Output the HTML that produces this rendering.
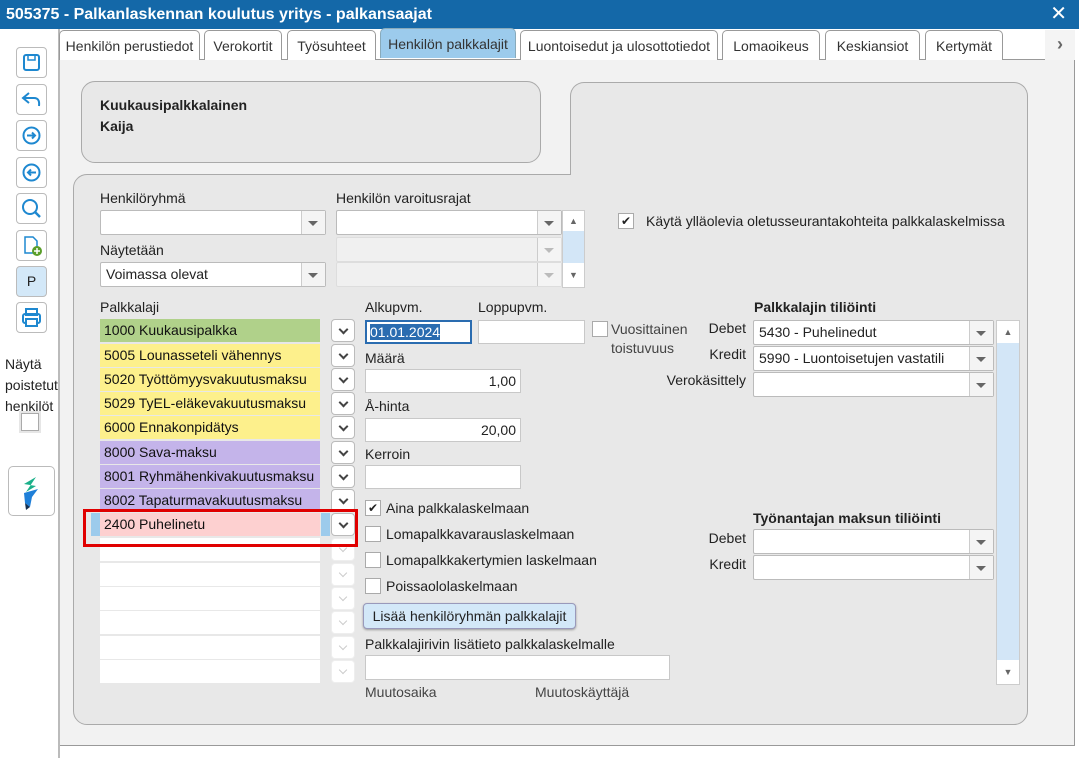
<!DOCTYPE html>
<html><head><meta charset="utf-8"><style>
*{box-sizing:border-box;margin:0;padding:0}
body{width:1079px;height:758px;position:relative;overflow:hidden;background:#fff;font-family:"Liberation Sans",sans-serif;font-size:14px;color:#222}
.a{position:absolute}
.title{left:0;top:0;width:1079px;height:29px;background:#1468a8;color:#fff;font-weight:bold;font-size:16px;line-height:29px;padding-left:6px}
.tab{position:absolute;top:30px;height:30px;border:1px solid #999;border-bottom:none;border-radius:5px 5px 0 0;background:#fff;text-align:center;line-height:30px;font-size:14px;color:#333}
.sb{position:absolute;left:16px;width:31px;height:31px;border:1px solid #bbb;border-radius:4px;background:#fff}
.inp{position:absolute;background:#fff;border:1px solid #c8c8c8;height:24px}
.sel{position:absolute;background:#fff;border:1px solid #bbb;border-radius:2px;height:25px;font-size:14px;line-height:23px;padding-left:5px}
.sel:after{content:"";position:absolute;right:0;top:0;width:23px;height:100%;border-left:1px solid #ccc;background:#f4f4f4}
.sel i{position:absolute;right:7px;top:10px;width:0;height:0;border-left:5px solid transparent;border-right:5px solid transparent;border-top:5px solid #666;z-index:2}
.lbl{position:absolute;font-size:14px}
.row{position:absolute;left:100px;width:220px;height:23px;font-size:14px;line-height:23px;padding-left:4px;color:#111}
.dd{position:absolute;left:331px;width:24px;height:23px;background:#fff;border:1px solid #bbb;border-radius:4px}
.dd:after{content:"";position:absolute;left:8px;top:6px;width:5px;height:5px;border-right:2px solid #444;border-bottom:2px solid #444;transform:rotate(45deg)}
.dd.x{border-color:#eee}.dd.x:after{border-color:#ccc;border-width:0 1px 1px 0}
.cb{position:absolute;width:16px;height:16px;border:1px solid #aaa;background:#fff;font-size:12px;line-height:14px;text-align:center}
</style></head><body>
<div class="a title">505375 - Palkanlaskennan koulutus yritys - palkansaajat<span style="position:absolute;right:12px;top:0;font-size:20px;font-weight:normal">✕</span></div>
<div class="a" style="left:58px;top:29px;width:2px;height:729px;background:#bbb"></div>
<div class="sb" style="top:47px"><svg width="29" height="29"><rect x="7" y="7" width="15" height="15" rx="2" fill="none" stroke="#1e88d0" stroke-width="2"/><rect x="11" y="7" width="7" height="5" fill="none" stroke="#1e88d0" stroke-width="1.5"/></svg></div>
<div class="sb" style="top:84px"><svg width="29" height="29"><path d="M12 8 L6 13 L12 18 M6 13 H17 Q23 13 22 21" fill="none" stroke="#1e88d0" stroke-width="2"/></svg></div>
<div class="sb" style="top:120px"><svg width="29" height="29"><circle cx="14.5" cy="14.5" r="8" fill="none" stroke="#1e88d0" stroke-width="2"/><path d="M10 14.5H18M15 11.5L18 14.5L15 17.5" fill="none" stroke="#1e88d0" stroke-width="2"/></svg></div>
<div class="sb" style="top:157px"><svg width="29" height="29"><circle cx="14.5" cy="14.5" r="8" fill="none" stroke="#1e88d0" stroke-width="2"/><path d="M19 14.5H11M14 11.5L11 14.5L14 17.5" fill="none" stroke="#1e88d0" stroke-width="2"/></svg></div>
<div class="sb" style="top:193px"><svg width="29" height="29"><circle cx="13" cy="13" r="7" fill="none" stroke="#1e88d0" stroke-width="2"/><path d="M18 18L23 23" stroke="#1e88d0" stroke-width="2.5"/></svg></div>
<div class="sb" style="top:230px"><svg width="29" height="29"><path d="M8 6H16L20 10V22H8Z" fill="none" stroke="#1e88d0" stroke-width="1.5"/><circle cx="20" cy="20" r="5" fill="#5a9e2a"/><path d="M17 20H23M20 17V23" stroke="#fff" stroke-width="1.5"/></svg></div>
<div class="sb" style="top:266px;background:#d3e8f8;text-align:center;line-height:29px;font-size:14px">P</div>
<div class="sb" style="top:302px"><svg width="29" height="29"><rect x="9" y="6" width="11" height="6" fill="none" stroke="#1e88d0" stroke-width="2"/><rect x="6" y="11" width="17" height="9" rx="2" fill="none" stroke="#1e88d0" stroke-width="2"/><rect x="9" y="16" width="11" height="7" fill="#fff" stroke="#1e88d0" stroke-width="2"/></svg></div>
<div class="lbl" style="left:5px;top:354px;font-size:14px;line-height:21px">Näytä<br>poistetut<br>henkilöt</div>
<div class="a" style="left:19px;top:411px;width:22px;height:22px;background:#e6e6e6"></div>
<div class="cb" style="left:21px;top:413px;width:18px;height:18px"></div>
<div class="sb" style="left:8px;top:466px;width:47px;height:50px;border-radius:5px"><svg width="45" height="48"><path d="M27 10 L15 17 L27 19 L17 25Z" fill="#1bb08a"/><path d="M15 26 L29 22 L23 30 L21 40 L16 36Z" fill="#1e7fd8"/><path d="M16 36 L21 40 L17 43Z" fill="#153050"/></svg></div>
<div class="a" style="left:60px;top:60px;width:1015px;height:686px;background:#f2f2f2;border-right:1px solid #999;border-bottom:1px solid #999"></div>
<div class="a" style="left:60px;top:59px;width:1015px;height:1px;background:#999"></div>
<div class="tab" style="left:59px;width:141px">Henkilön perustiedot</div>
<div class="tab" style="left:204px;width:78px">Verokortit</div>
<div class="tab" style="left:287px;width:89px">Työsuhteet</div>
<div class="tab" style="left:380px;width:136px;background:#9ccbec;height:30px;top:28px;border-color:#8ab">Henkilön palkkalajit</div>
<div class="tab" style="left:520px;width:198px">Luontoisedut ja ulosottotiedot</div>
<div class="tab" style="left:722px;width:98px">Lomaoikeus</div>
<div class="tab" style="left:825px;width:95px">Keskiansiot</div>
<div class="tab" style="left:925px;width:78px;text-align:left;padding-left:10px;overflow:hidden">Kertymät</div>
<div class="a" style="left:1045px;top:30px;width:30px;height:30px;background:#f4f4f4;text-align:center;line-height:28px;font-size:18px;color:#666;font-weight:bold">›</div>
<div class="a" style="left:81px;top:81px;width:460px;height:82px;background:#e8e8e8;border:1px solid #aaa;border-radius:14px"></div>
<div class="lbl" style="left:100px;top:95px;font-weight:bold;line-height:21px">Kuukausipalkkalainen<br>Kaija</div>
<div class="a" style="left:73px;top:174px;width:955px;height:551px;background:#e8e8e8;border:1px solid #aaa;border-radius:14px 0 14px 14px"></div>
<div class="a" style="left:570px;top:82px;width:458px;height:93px;background:#e8e8e8;border:1px solid #aaa;border-bottom:none;border-radius:14px 14px 0 0"></div>
<div class="a" style="left:571px;top:170px;width:456px;height:14px;background:#e8e8e8"></div>
<div class="lbl" style="left:100px;top:190px">Henkilöryhmä</div>
<div class="sel" style="left:100px;top:210px;width:226px"><i></i></div>
<div class="lbl" style="left:336px;top:190px">Henkilön varoitusrajat</div>
<div class="sel" style="left:336px;top:210px;width:226px"><i></i></div>
<div class="sel" style="left:336px;top:237px;width:226px;background:#f0f0f0;border-color:#ddd"><i style="border-top-color:#bbb"></i></div>
<div class="sel" style="left:336px;top:262px;width:226px;background:#f0f0f0;border-color:#ddd"><i style="border-top-color:#bbb"></i></div>
<div class="a" style="left:562px;top:210px;width:23px;height:78px;background:#d3e6f7;border:1px solid #ccc"></div>
<div class="a" style="left:563px;top:211px;width:21px;height:20px;background:#fff;text-align:center;font-size:9px;line-height:20px;color:#666">▲</div>
<div class="a" style="left:563px;top:263px;width:21px;height:24px;background:#fff;text-align:center;font-size:9px;line-height:24px;color:#666">▼</div>
<div class="lbl" style="left:100px;top:242px">Näytetään</div>
<div class="sel" style="left:100px;top:262px;width:226px">Voimassa olevat<i></i></div>
<div class="cb" style="left:618px;top:213px">✔</div>
<div class="lbl" style="left:646px;top:213px">Käytä ylläolevia oletusseurantakohteita palkkalaskelmissa</div>
<div class="lbl" style="left:100px;top:299px">Palkkalaji</div>
<div class="row" style="top:319px;background:#b0d18a">1000 Kuukausipalkka</div>
<div class="row" style="top:344px;background:#fdf08c">5005 Lounasseteli vähennys</div>
<div class="row" style="top:368px;background:#fdf08c">5020 Työttömyysvakuutusmaksu</div>
<div class="row" style="top:392px;background:#fdf08c">5029 TyEL-eläkevakuutusmaksu</div>
<div class="row" style="top:416px;background:#fdf08c">6000 Ennakonpidätys</div>
<div class="row" style="top:441px;background:#c4b4ea">8000 Sava-maksu</div>
<div class="row" style="top:465px;background:#c4b4ea">8001 Ryhmähenkivakuutusmaksu</div>
<div class="row" style="top:489px;background:#c4b4ea">8002 Tapaturmavakuutusmaksu</div>
<div class="a" style="left:91px;top:513px;width:9px;height:23px;background:#9ccbec"></div>
<div class="a" style="left:321px;top:513px;width:9px;height:23px;background:#9ccbec"></div>
<div class="row" style="top:513px;background:#fdd0d0">2400 Puhelinetu</div>
<div class="row" style="top:538px;background:#fff"></div>
<div class="row" style="top:563px;background:#fff"></div>
<div class="row" style="top:587px;background:#fff"></div>
<div class="row" style="top:611px;background:#fff"></div>
<div class="row" style="top:636px;background:#fff"></div>
<div class="row" style="top:660px;background:#fff"></div>
<div class="dd" style="top:319px"></div><div class="dd" style="top:344px"></div><div class="dd" style="top:368px"></div><div class="dd" style="top:392px"></div><div class="dd" style="top:416px"></div><div class="dd" style="top:441px"></div><div class="dd" style="top:465px"></div><div class="dd" style="top:489px"></div><div class="dd" style="top:513px"></div>
<div class="dd x" style="top:538px"></div><div class="dd x" style="top:563px"></div><div class="dd x" style="top:587px"></div><div class="dd x" style="top:611px"></div><div class="dd x" style="top:636px"></div><div class="dd x" style="top:660px"></div>
<div class="a" style="left:83px;top:509px;width:275px;height:38px;border:3px solid #e00000"></div>
<div class="lbl" style="left:365px;top:299px">Alkupvm.</div>
<div class="lbl" style="left:478px;top:299px">Loppupvm.</div>
<div class="inp" style="left:365px;top:320px;width:107px;border:2px solid #2a6cb0;padding:2px 3px"><span style="background:#2a6cb0;color:#fff;font-size:14px;line-height:16px">01.01.2024</span></div>
<div class="inp" style="left:478px;top:320px;width:107px"></div>
<div class="cb" style="left:592px;top:321px"></div>
<div class="lbl" style="left:611px;top:320px;line-height:19px;color:#444">Vuosittainen<br>toistuvuus</div>
<div class="lbl" style="left:365px;top:350px">Määrä</div>
<div class="inp" style="left:365px;top:369px;width:156px;text-align:right;padding-right:4px;line-height:22px">1,00</div>
<div class="lbl" style="left:365px;top:398px">Å-hinta</div>
<div class="inp" style="left:365px;top:418px;width:156px;text-align:right;padding-right:4px;line-height:22px">20,00</div>
<div class="lbl" style="left:365px;top:446px">Kerroin</div>
<div class="inp" style="left:365px;top:465px;width:156px"></div>
<div class="cb" style="left:365px;top:500px">✔</div><div class="lbl" style="left:386px;top:500px">Aina palkkalaskelmaan</div>
<div class="cb" style="left:365px;top:526px"></div><div class="lbl" style="left:386px;top:526px">Lomapalkkavarauslaskelmaan</div>
<div class="cb" style="left:365px;top:552px"></div><div class="lbl" style="left:386px;top:552px">Lomapalkkakertymien laskelmaan</div>
<div class="cb" style="left:365px;top:578px"></div><div class="lbl" style="left:386px;top:578px">Poissaololaskelmaan</div>
<div class="a" style="left:363px;top:603px;width:213px;height:26px;background:#d3e8f8;border:1px solid #99b;border-radius:4px;font-size:14px;line-height:24px;text-align:center;box-shadow:0 1px 2px #999">Lisää henkilöryhmän palkkalajit</div>
<div class="lbl" style="left:365px;top:636px">Palkkalajirivin lisätieto palkkalaskelmalle</div>
<div class="inp" style="left:365px;top:655px;width:305px;height:25px"></div>
<div class="lbl" style="left:365px;top:684px;color:#444">Muutosaika</div>
<div class="lbl" style="left:535px;top:684px;color:#444">Muutoskäyttäjä</div>
<div class="lbl" style="left:754px;top:299px;font-weight:bold">Palkkalajin tiliöinti</div>
<div class="lbl" style="left:706px;top:320px;width:40px;text-align:right">Debet</div>
<div class="sel" style="left:753px;top:320px;width:241px">5430 - Puhelinedut<i></i></div>
<div class="lbl" style="left:706px;top:346px;width:40px;text-align:right">Kredit</div>
<div class="sel" style="left:753px;top:346px;width:241px">5990 - Luontoisetujen vastatili<i></i></div>
<div class="lbl" style="left:650px;top:372px;width:96px;text-align:right">Verokäsittely</div>
<div class="sel" style="left:753px;top:372px;width:241px"><i></i></div>
<div class="lbl" style="left:753px;top:510px;font-weight:bold">Työnantajan maksun tiliöinti</div>
<div class="lbl" style="left:706px;top:530px;width:40px;text-align:right">Debet</div>
<div class="sel" style="left:753px;top:529px;width:241px"><i></i></div>
<div class="lbl" style="left:706px;top:556px;width:40px;text-align:right">Kredit</div>
<div class="sel" style="left:753px;top:555px;width:241px"><i></i></div>
<div class="a" style="left:996px;top:320px;width:24px;height:365px;background:#d3e6f7;border:1px solid #ccc"></div>
<div class="a" style="left:997px;top:321px;width:22px;height:22px;background:#fff;text-align:center;font-size:9px;line-height:22px;color:#666">▲</div>
<div class="a" style="left:997px;top:660px;width:22px;height:24px;background:#fff;text-align:center;font-size:9px;line-height:24px;color:#666">▼</div>
</body></html>
